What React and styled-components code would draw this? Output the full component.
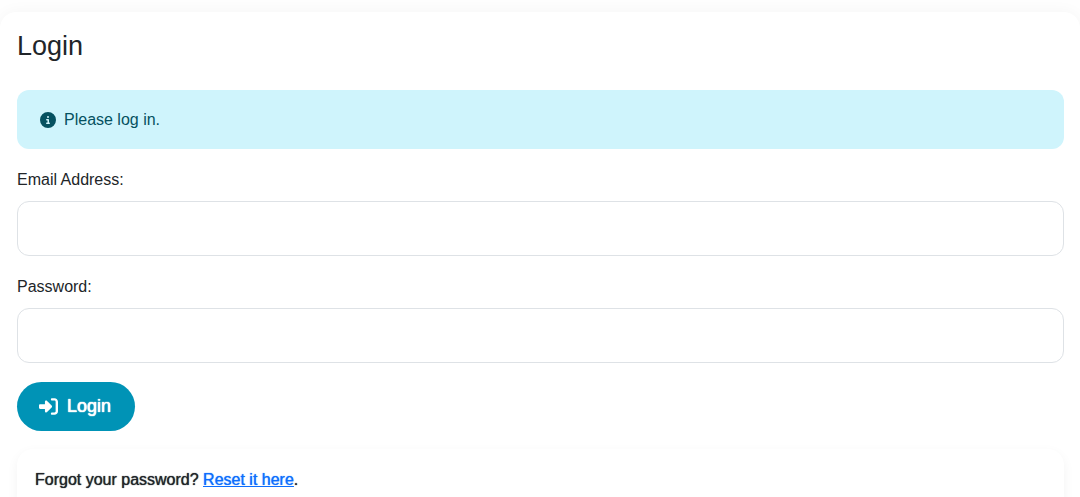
import React from 'react'
import styled, { createGlobalStyle } from 'styled-components'
import { FaCircleInfo, FaRightToBracket } from 'react-icons/fa6'

const App = () => {
  return (
    <>
      <GlobalStyle />
      <Page>
        <LoginCard>
          <Title>Login</Title>
          <Alert role="alert">
            <FaCircleInfo size={16} />
            <span>Please log in.</span>
          </Alert>
          <form onSubmit={(e) => e.preventDefault()}>
            <Field>
              <Label htmlFor="email">Email Address:</Label>
              <Input id="email" type="email" />
            </Field>
            <Field>
              <Label htmlFor="password">Password:</Label>
              <Input id="password" type="password" />
            </Field>
            <LoginButton type="submit">
              <FaRightToBracket size={19} />
              <span>Login</span>
            </LoginButton>
          </form>
          <ResetCard>
            Forgot your password? <ResetLink href="#reset">Reset it here</ResetLink>.
          </ResetCard>
        </LoginCard>
      </Page>
    </>
  )
}

const GlobalStyle = createGlobalStyle`
  * {
    box-sizing: border-box;
  }
  body {
    margin: 0;
    background: #fefefe;
    color: #212529;
    font-family: 'Liberation Sans', Arial, sans-serif;
    font-size: 16px;
    line-height: 24px;
  }
  html {
    scrollbar-width: none;
  }
`

const Page = styled.main`
  padding-top: 12px;
`

const LoginCard = styled.section`
  padding: 17px 16px 17px 17px;
  background: white;
  border-radius: 16px;
  box-shadow: 0 0 16px rgba(0, 0, 0, 0.04);
`

const Title = styled.h1`
  margin: 0 0 27px;
  font-size: 27px;
  font-weight: 400;
  line-height: 34px;
`

const Alert = styled.div`
  display: flex;
  align-items: center;
  gap: 8px;
  margin-bottom: 19px;
  padding: 18px 23px 17px;
  background: #cff4fc;
  color: #055160;
  border-radius: 12px;
`

const Field = styled.div`
  margin-bottom: 19px;
`

const Label = styled.label`
  display: block;
  margin-bottom: 9px;
`

const Input = styled.input`
  display: block;
  width: 100%;
  height: 55px;
  padding: 16px;
  background: white;
  border: 1px solid #dee2e6;
  border-radius: 12px;
  font: inherit;
`

const LoginButton = styled.button`
  display: flex;
  align-items: center;
  gap: 9px;
  height: 49px;
  padding: 0 24px 0 22px;
  border: none;
  border-radius: 25px;
  background: #0093b6;
  color: white;
  font-family: inherit;
  font-size: 18px;
  text-shadow: 0 0 1px currentColor, 0 0 1px currentColor;
  cursor: pointer;
`

const ResetCard = styled.div`
  margin-top: 18px;
  padding: 19px 18px;
  background: white;
  border-radius: 16px;
  box-shadow: 0 4px 12px rgba(0, 0, 0, 0.05);
  text-shadow: 0 0 1px currentColor;
`

const ResetLink = styled.a`
  color: #0d6efd;
`

export default App
